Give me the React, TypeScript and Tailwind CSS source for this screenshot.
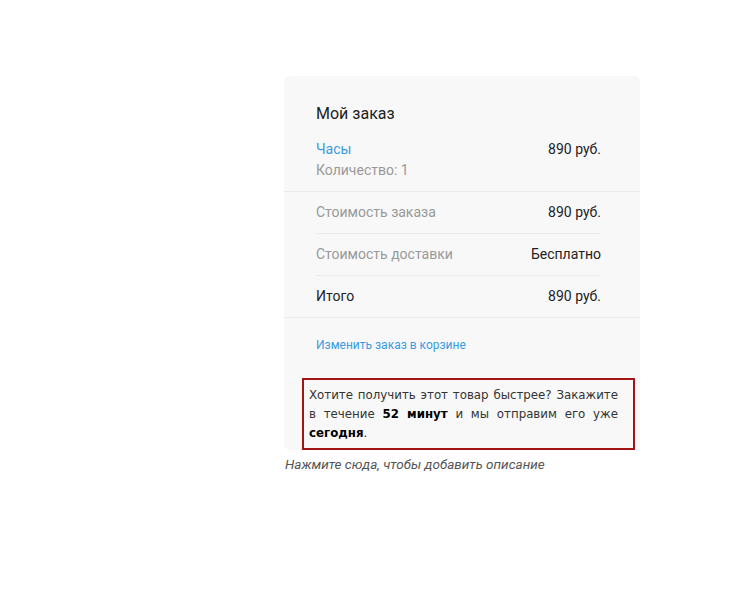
export default function App() {
  return (
    <div className="min-h-[609px] w-full bg-white pt-[76px] pl-[284px] font-['Roboto',sans-serif]">
      <div className="w-[356px]">
        <div className="rounded-md bg-[#f8f8f8] pb-0">
          <div className="pl-8 pr-[39px] pt-[27px] pb-[11px]">
            <p className="text-[16px] leading-[22px] text-[#222]">Мой заказ</p>
            <div className="mt-[14px] flex justify-between text-[14px] leading-[20px]">
              <div>
                <p className="text-[#3a9be0]">Часы</p>
                <p className="mt-[1px] text-[#999]">Количество: 1</p>
              </div>
              <p className="text-[#222]">890 руб.</p>
            </div>
          </div>
          <div className="border-t border-[#ebebeb] pl-8 pr-[39px] text-[14px]">
            <div className="flex h-[42px] items-center justify-between border-b border-[#ebebeb]">
              <span className="text-[#999]">Стоимость заказа</span>
              <span className="text-[#222]">890 руб.</span>
            </div>
            <div className="flex h-[42px] items-center justify-between border-b border-[#ebebeb]">
              <span className="text-[#999]">Стоимость доставки</span>
              <span className="text-[#222]">Бесплатно</span>
            </div>
            <div className="flex h-[41px] items-center justify-between">
              <span className="text-[#222]">Итого</span>
              <span className="text-[#222]">890 руб.</span>
            </div>
          </div>
          <div className="border-t border-[#ebebeb] pl-8 pt-[14px] pb-[22px]">
            <a className="text-[12px] leading-[16px] text-[#3a9be0]">Изменить заказ в корзине</a>
          </div>
          <div className="-mb-2 ml-[18px] mr-[5px] border-2 border-[#a31515] pl-[5px] pr-[15px] pt-[6px] pb-[5px] text-justify font-['DejaVu_Sans',sans-serif] text-[11.8px] leading-[19px] text-[#333]">
            Хотите получить этот товар быстрее? Закажите в течение <b className="text-black">52 минут</b> и мы отправим его уже <b className="text-black">сегодня</b>.
          </div>
        </div>
        <p className="mt-[14px] pl-[1px] text-[13.5px] italic leading-[16px] text-[#555]">
          Нажмите сюда, чтобы добавить описание
        </p>
      </div>
    </div>
  );
}
